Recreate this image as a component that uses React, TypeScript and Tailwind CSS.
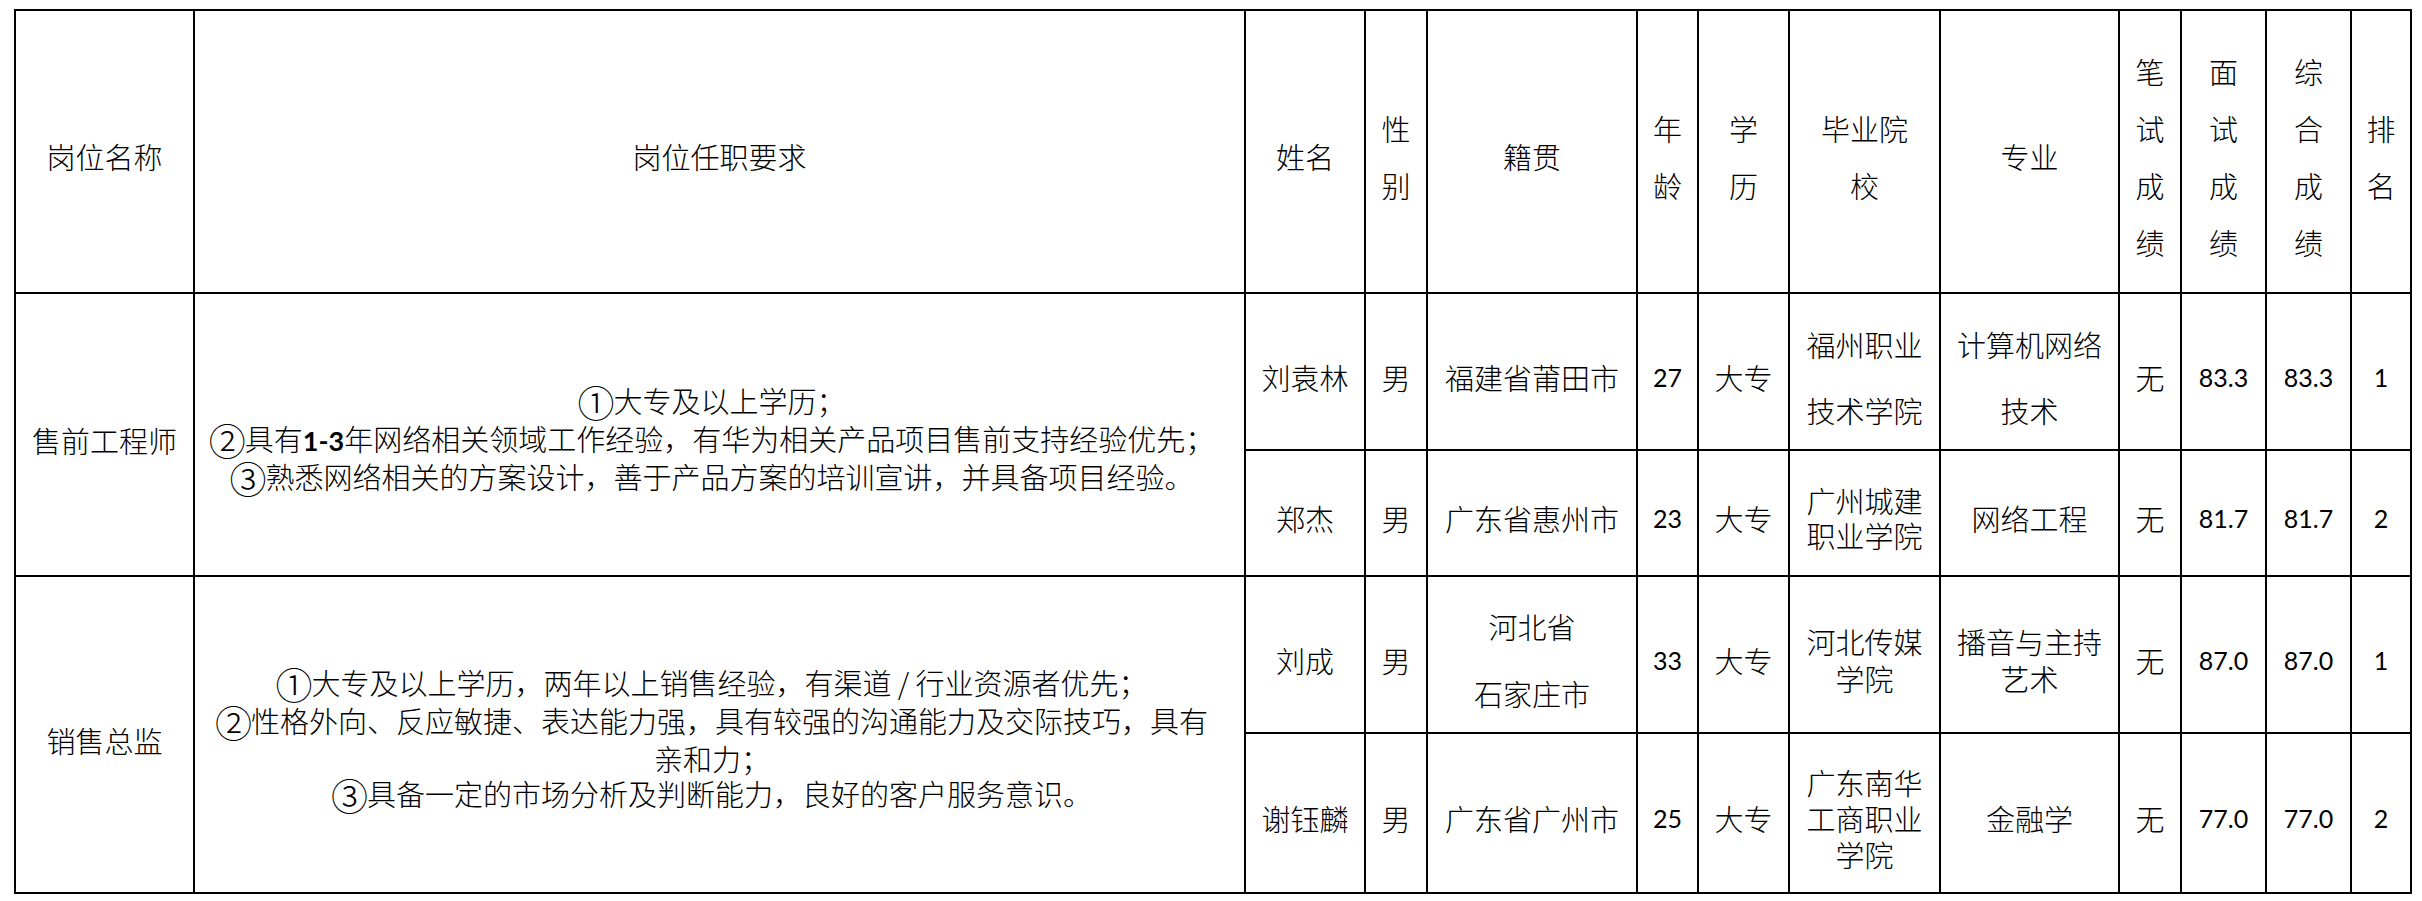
import React from "react";

const C = "border-r-2 border-b-2 border-black text-center align-middle p-0 pt-[10px] font-light";
const N = "font-['Lato',sans-serif] font-normal text-[25px]";

function Circ({ n }: { n: string }) {
  return (
    <span className="inline-block text-[37px] leading-none align-[-5px] mx-[-1px]">{n}</span>
  );
}

function HeadCell({ lines }: { lines: string[] }) {
  return (
    <td className={C + " leading-[57px]"}>
      {lines.map((l, i) => (
        <div key={i} className="whitespace-nowrap">
          {l}
        </div>
      ))}
    </td>
  );
}

function Lines({ lines, lh }: { lines: string[]; lh: string }) {
  return (
    <div className={lh}>
      {lines.map((l, i) => (
        <div key={i} className="whitespace-nowrap">
          {l}
        </div>
      ))}
    </div>
  );
}

export default function App() {
  return (
    <div className="bg-white w-[2422px] h-[901px] pl-[14px] pt-[9px] text-black font-['Noto_Sans_CJK_SC',sans-serif] text-[29px] leading-[36px]">
      <table className="table-fixed border-separate border-spacing-0 border-l-2 border-t-2 border-black w-[2398px]">
        <colgroup>
          <col className="w-[179px]" />
          <col className="w-[1051px]" />
          <col className="w-[120px]" />
          <col className="w-[62px]" />
          <col className="w-[210px]" />
          <col className="w-[61px]" />
          <col className="w-[91px]" />
          <col className="w-[151px]" />
          <col className="w-[179px]" />
          <col className="w-[62px]" />
          <col className="w-[85px]" />
          <col className="w-[85px]" />
          <col className="w-[60px]" />
        </colgroup>
        <tbody>
          <tr className="h-[283px]">
            <HeadCell lines={["岗位名称"]} />
            <HeadCell lines={["岗位任职要求"]} />
            <HeadCell lines={["姓名"]} />
            <HeadCell lines={["性", "别"]} />
            <HeadCell lines={["籍贯"]} />
            <HeadCell lines={["年", "龄"]} />
            <HeadCell lines={["学", "历"]} />
            <HeadCell lines={["毕业院", "校"]} />
            <HeadCell lines={["专业"]} />
            <HeadCell lines={["笔", "试", "成", "绩"]} />
            <HeadCell lines={["面", "试", "成", "绩"]} />
            <HeadCell lines={["综", "合", "成", "绩"]} />
            <HeadCell lines={["排", "名"]} />
          </tr>
          <tr className="h-[157px]">
            <td className={C} rowSpan={2}>售前工程师</td>
            <td className={C + " pr-[15px] leading-[35.5px]"} rowSpan={2}>
              <div className="whitespace-nowrap"><Circ n="①" />大专及以上学历；</div>
              <div className="whitespace-nowrap">
                <Circ n="②" />具有<span className="font-['Lato',sans-serif] font-bold text-[27px]">1-3</span>年网络相关领域工作经验，有华为相关产品项目售前支持经验优先；
              </div>
              <div className="whitespace-nowrap"><Circ n="③" />熟悉网络相关的方案设计，善于产品方案的培训宣讲，并具备项目经验。</div>
            </td>
            <td className={C}>刘袁林</td>
            <td className={C}>男</td>
            <td className={C}>福建省莆田市</td>
            <td className={C + " " + N}>27</td>
            <td className={C}>大专</td>
            <td className={C}><Lines lines={["福州职业", "技术学院"]} lh="leading-[66px]" /></td>
            <td className={C}><Lines lines={["计算机网络", "技术"]} lh="leading-[66px]" /></td>
            <td className={C}>无</td>
            <td className={C + " " + N}>83.3</td>
            <td className={C + " " + N}>83.3</td>
            <td className={C + " " + N}>1</td>
          </tr>
          <tr className="h-[126px]">
            <td className={C}>郑杰</td>
            <td className={C}>男</td>
            <td className={C}>广东省惠州市</td>
            <td className={C + " " + N}>23</td>
            <td className={C}>大专</td>
            <td className={C}><Lines lines={["广州城建", "职业学院"]} lh="leading-[35px]" /></td>
            <td className={C}>网络工程</td>
            <td className={C}>无</td>
            <td className={C + " " + N}>81.7</td>
            <td className={C + " " + N}>81.7</td>
            <td className={C + " " + N}>2</td>
          </tr>
          <tr className="h-[157px]">
            <td className={C} rowSpan={2}>销售总监</td>
            <td className={C + " pr-[15px] leading-[35px]"} rowSpan={2}>
              <div className="whitespace-nowrap"><Circ n="①" />大专及以上学历，两年以上销售经验，有渠道 / 行业资源者优先；</div>
              <div className="whitespace-nowrap"><Circ n="②" />性格外向、反应敏捷、表达能力强，具有较强的沟通能力及交际技巧，具有</div>
              <div className="whitespace-nowrap">亲和力；</div>
              <div className="whitespace-nowrap"><Circ n="③" />具备一定的市场分析及判断能力，良好的客户服务意识。</div>
            </td>
            <td className={C}>刘成</td>
            <td className={C}>男</td>
            <td className={C}><Lines lines={["河北省", "石家庄市"]} lh="leading-[67px]" /></td>
            <td className={C + " " + N}>33</td>
            <td className={C}>大专</td>
            <td className={C}><Lines lines={["河北传媒", "学院"]} lh="leading-[37px]" /></td>
            <td className={C}><Lines lines={["播音与主持", "艺术"]} lh="leading-[37px]" /></td>
            <td className={C}>无</td>
            <td className={C + " " + N}>87.0</td>
            <td className={C + " " + N}>87.0</td>
            <td className={C + " " + N}>1</td>
          </tr>
          <tr className="h-[160px]">
            <td className={C}>谢钰麟</td>
            <td className={C}>男</td>
            <td className={C}>广东省广州市</td>
            <td className={C + " " + N}>25</td>
            <td className={C}>大专</td>
            <td className={C}><Lines lines={["广东南华", "工商职业", "学院"]} lh="leading-[36px]" /></td>
            <td className={C}>金融学</td>
            <td className={C}>无</td>
            <td className={C + " " + N}>77.0</td>
            <td className={C + " " + N}>77.0</td>
            <td className={C + " " + N}>2</td>
          </tr>
        </tbody>
      </table>
    </div>
  );
}
